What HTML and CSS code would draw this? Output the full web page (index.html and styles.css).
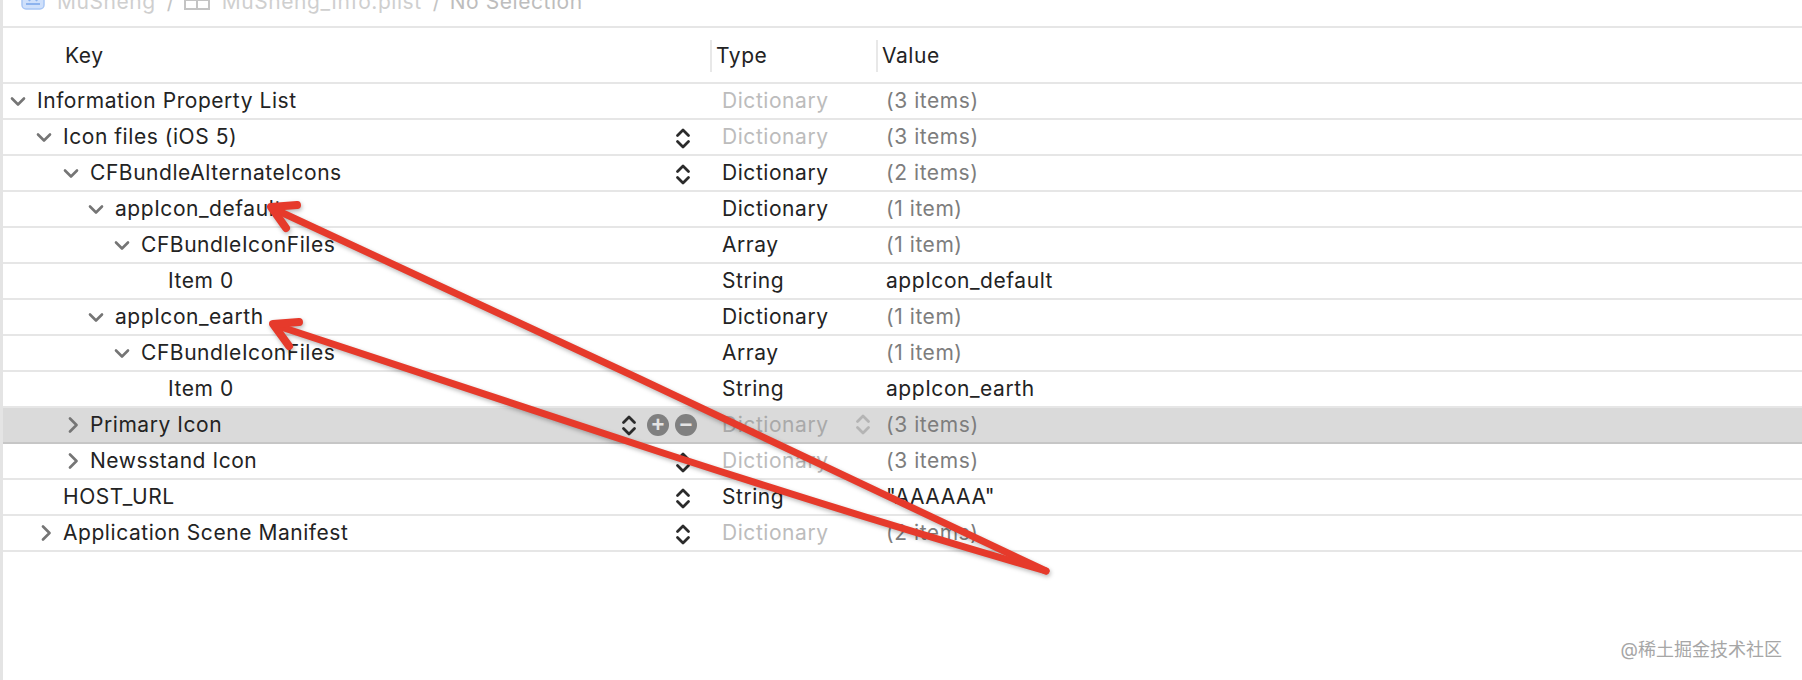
FILE: index.html
```html
<!DOCTYPE html>
<html lang="en">
<head>
<meta charset="utf-8">
<title>MuSheng_Info.plist</title>
<link rel="stylesheet" href="styles.css">
</head>
<body>
<svg class="defs" width="0" height="0" aria-hidden="true">
  <symbol id="down" viewBox="0 0 16 16"><path d="M2 5.500l6 6 6-6" fill="none" stroke="currentColor" stroke-width="2.600" stroke-linecap="round" stroke-linejoin="round"/></symbol>
  <symbol id="right" viewBox="0 0 16 16"><path d="M7 1.500l6.500 6.500-6.500 6.500" fill="none" stroke="currentColor" stroke-width="2.600" stroke-linecap="round" stroke-linejoin="round"/></symbol>
  <symbol id="updown" viewBox="0 0 16 24"><path d="M2.500 9.500L8 4 13.500 9.500M2.500 15.500L8 21 13.500 15.500" fill="none" stroke="currentColor" stroke-width="2.800" stroke-linecap="round" stroke-linejoin="round"/></symbol>
</svg>
<main class="page">
  <nav class="crumbs">
    <div class="crumb-line">
      <svg class="crumb-icon app" viewBox="0 0 24 24"><rect x="1" y="-6" width="22" height="26" rx="4" fill="#cfe0fb" stroke="#a9c6f5" stroke-width="1.500"/><path d="M6 8l3 4M18 8l-3 4M5 15h14" stroke="#8db3ee" stroke-width="2" fill="none"/></svg>
      <span class="crumb-text c1">MuSheng</span>
      <span class="crumb-sep s1">/</span>
      <svg class="crumb-icon grid" viewBox="0 0 26 20"><path d="M1 2h24v16H1zM1 9h24M13 9v9" fill="none" stroke="#c4c4c4" stroke-width="2"/></svg>
      <span class="crumb-text c2">MuSheng_Info.plist</span>
      <span class="crumb-sep s2">/</span>
      <span class="crumb-text c3">No Selection</span>
    </div>
  </nav>

  <header class="head">
    <div class="head-key">Key</div>
    <div class="head-col head-type">Type</div>
    <div class="head-col head-value">Value</div>
  </header>

  <section class="rows">
    <div class="row">
      <div class="key l0"><svg class="chev"><use href="#down"/></svg><span>Information Property List</span></div>
      <div class="type dim">Dictionary</div><div class="value muted">(3 items)</div>
    </div>
    <div class="row">
      <div class="key l1"><svg class="chev"><use href="#down"/></svg><span>Icon files (iOS 5)</span><svg class="stepper"><use href="#updown"/></svg></div>
      <div class="type dim">Dictionary</div><div class="value muted">(3 items)</div>
    </div>
    <div class="row">
      <div class="key l2"><svg class="chev"><use href="#down"/></svg><span>CFBundleAlternateIcons</span><svg class="stepper"><use href="#updown"/></svg></div>
      <div class="type">Dictionary</div><div class="value muted">(2 items)</div>
    </div>
    <div class="row">
      <div class="key l3"><svg class="chev"><use href="#down"/></svg><span>appIcon_default</span></div>
      <div class="type">Dictionary</div><div class="value muted">(1 item)</div>
    </div>
    <div class="row">
      <div class="key l4"><svg class="chev"><use href="#down"/></svg><span>CFBundleIconFiles</span></div>
      <div class="type">Array</div><div class="value muted">(1 item)</div>
    </div>
    <div class="row">
      <div class="key l5"><span class="chev"></span><span>Item 0</span></div>
      <div class="type">String</div><div class="value">appIcon_default</div>
    </div>
    <div class="row">
      <div class="key l3"><svg class="chev"><use href="#down"/></svg><span>appIcon_earth</span></div>
      <div class="type">Dictionary</div><div class="value muted">(1 item)</div>
    </div>
    <div class="row">
      <div class="key l4"><svg class="chev"><use href="#down"/></svg><span>CFBundleIconFiles</span></div>
      <div class="type">Array</div><div class="value muted">(1 item)</div>
    </div>
    <div class="row">
      <div class="key l5"><span class="chev"></span><span>Item 0</span></div>
      <div class="type">String</div><div class="value">appIcon_earth</div>
    </div>
    <div class="row selected">
      <div class="key l2"><svg class="chev"><use href="#right"/></svg><span>Primary Icon</span>
        <div class="controls">
          <svg class="stepper-in"><use href="#updown"/></svg>
          <span class="round">+</span>
          <span class="round">−</span>
        </div>
      </div>
      <div class="type dim dim-sel">Dictionary<svg class="stepper-faint"><use href="#updown"/></svg></div>
      <div class="value muted">(3 items)</div>
    </div>
    <div class="row">
      <div class="key l2"><svg class="chev"><use href="#right"/></svg><span>Newsstand Icon</span><svg class="stepper"><use href="#updown"/></svg></div>
      <div class="type dim">Dictionary</div><div class="value muted">(3 items)</div>
    </div>
    <div class="row">
      <div class="key l1"><span class="chev"></span><span>HOST_URL</span><svg class="stepper"><use href="#updown"/></svg></div>
      <div class="type">String</div><div class="value">"AAAAAA"</div>
    </div>
    <div class="row">
      <div class="key l1"><svg class="chev"><use href="#right"/></svg><span>Application Scene Manifest</span><svg class="stepper"><use href="#updown"/></svg></div>
      <div class="type dim">Dictionary</div><div class="value muted">(2 items)</div>
    </div>
  </section>

  <svg class="arrows" viewBox="0 0 1802 680" width="1802" height="680" aria-hidden="true">
    <g fill="none" stroke="#e63a2b" stroke-linecap="round" stroke-linejoin="round">
      <path d="M272 208L640 379L1046 571" stroke-width="7"/>
      <path d="M297 205L271 207L286 228" stroke-width="8"/>
      <path d="M275 325L660 452Q860 517 1046 571" stroke-width="7"/>
      <path d="M299 322L273 324L289 346" stroke-width="8"/>
    </g>
  </svg>

  <div class="watermark">@稀土掘金技术社区</div>
</main>
</body>
</html>
```

FILE: styles.css
```css
* { box-sizing: border-box; }

html, body {
  margin: 0;
  padding: 0;
  background: #fff;
}

body {
  width: 1802px;
  height: 680px;
  overflow: hidden;
  font-family: "Inter", "Liberation Sans", "Noto Sans CJK SC", sans-serif;
  font-size: 21px;
  letter-spacing: 0.55px;
  color: #232323;
}

.defs { position: absolute; }

.page {
  position: relative;
  width: 1802px;
  height: 680px;
  border-left: 3px solid #e4e4e4;
  overflow: hidden;
}

/* breadcrumb, cut by the top of the picture */
.crumbs {
  height: 28px;
  border-bottom: 2px solid #e6e6e6;
  overflow: hidden;
}

.crumb-line {
  display: flex;
  align-items: center;
  height: 28px;
  margin-top: -13px;
  padding-left: 18px;
  color: #cfcfcf;
}

.crumb-icon.app { width: 24px; height: 24px; }
.crumb-icon.grid { width: 26px; height: 20px; margin-left: 9px; }
.crumb-text.c1 { margin-left: 12px; }
.crumb-text.c2 { margin-left: 12px; }
.crumb-text.c3 { margin-left: 9px; color: #bdbdbd; }
.crumb-sep { margin-left: 11px; color: #c4c4c4; }

/* table head */
.head {
  display: grid;
  grid-template-columns: 707px 166px 1fr;
  height: 56px;
  align-items: center;
  padding-top: 1px;
  border-bottom: 2px solid #e6e6e6;
}

.head-key { padding-left: 62px; }

.head-col {
  height: 32px;
  line-height: 32px;
  padding-left: 4px;
  border-left: 2px solid #e8e8e8;
}

/* rows */
.row {
  display: grid;
  grid-template-columns: 707px 166px 1fr;
  height: 36px;
  align-items: center;
  padding-bottom: 2px;
  border-bottom: 2px solid #e6e6e6;
}

.row.selected {
  background: #dadada;
  border-bottom-color: #c6c6c6;
}

.key {
  display: flex;
  align-items: center;
  height: 100%;
  gap: 11px;
  white-space: nowrap;
}

.l0 { padding-left: 7px; }
.l1 { padding-left: 33px; }
.l2 { padding-left: 60px; }
.l3 { padding-left: 85px; }
.l4 { padding-left: 111px; }
.l5 { padding-left: 138px; }

.chev {
  flex: none;
  width: 16px;
  height: 16px;
  margin-top: 2px;
  color: #757575;
}

.stepper {
  flex: none;
  width: 16px;
  height: 24px;
  margin-left: auto;
  margin-right: 19px;
  margin-top: 4px;
  color: #2b2b2b;
}

.controls {
  display: flex;
  align-items: center;
  gap: 6px;
  margin-left: auto;
  margin-right: 13px;
  margin-top: 2px;
}

.stepper-in {
  width: 16px;
  height: 24px;
  margin-right: 4px;
  color: #2b2b2b;
}

.round {
  width: 22px;
  height: 22px;
  border-radius: 50%;
  background: #808080;
  color: #e4e4e4;
  font-family: "Liberation Sans", sans-serif;
  font-size: 22px;
  font-weight: 700;
  letter-spacing: 0;
  line-height: 21px;
  text-align: center;
}

.type {
  display: flex;
  align-items: center;
  justify-content: space-between;
  padding-left: 12px;
  padding-right: 5px;
}

.stepper-faint {
  width: 16px;
  height: 24px;
  color: #b4b4b4;
}

.value { padding-left: 10px; }

.dim { color: #bcbcbc; }
.dim-sel { color: #a9a9a9; }
.muted { color: #7d7d7d; }

/* hand-drawn annotation arrows over the table */
.arrows {
  position: absolute;
  left: -3px;
  top: 0;
  filter: drop-shadow(1px 2px 2px rgba(0, 0, 0, 0.28));
}

.watermark {
  position: absolute;
  right: 20px;
  top: 635px;
  font-size: 18px;
  letter-spacing: 0;
  color: #a6a6a6;
  white-space: nowrap;
}
```
